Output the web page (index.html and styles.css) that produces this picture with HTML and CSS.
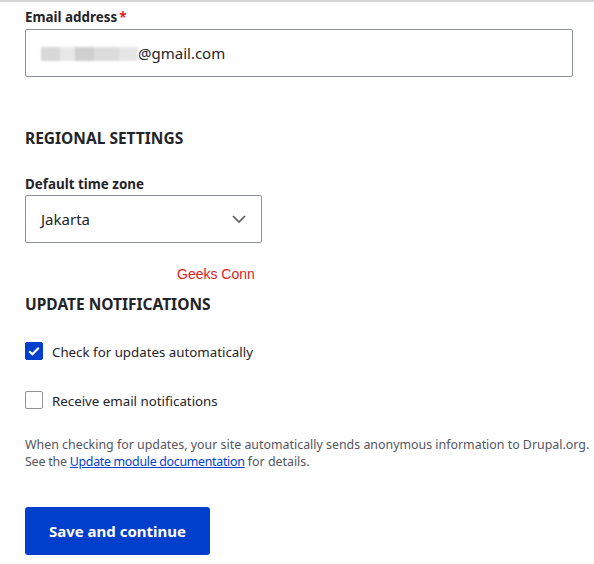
FILE: index.html
```html
<!DOCTYPE html>
<html lang="en">
<head>
<meta charset="utf-8">
<title>Configure site</title>
<link rel="stylesheet" href="styles.css">
</head>
<body>
<div class="topline"></div>
<form class="form">
  <div class="field">
    <label class="label">Email address<span class="req">*</span></label>
    <div class="input"><span class="blur"></span><span>@gmail.com</span></div>
  </div>

  <h2 class="section-title regional">REGIONAL SETTINGS</h2>
  <div class="field">
    <label class="label">Default time zone</label>
    <div class="select">
      <span>Jakarta</span>
      <svg class="chev" width="14" height="8" viewBox="0 0 14 8"><path d="M1 1l6 6 6-6" fill="none" stroke="#55565b" stroke-width="1.6"/></svg>
    </div>
  </div>

  <div class="watermark">Geeks Conn</div>

  <h2 class="section-title updates">UPDATE NOTIFICATIONS</h2>

  <div class="check-row first">
    <span class="box checked"><svg width="12" height="10" viewBox="0 0 12 10"><path d="M1.2 5.2l3.2 3.1 6.4-6.6" fill="none" stroke="#fff" stroke-width="2.1"/></svg></span>
    <span class="check-label">Check for updates automatically</span>
  </div>
  <div class="check-row second">
    <span class="box"></span>
    <span class="check-label">Receive email notifications</span>
  </div>

  <p class="desc">When checking for updates, your site automatically sends anonymous information to Drupal.org.<br><span class="see">See the </span><a href="#">Update module documentation</a> for details.</p>

  <button type="button" class="btn">Save and continue</button>
</form>
</body>
</html>
```
FILE: styles.css
```css
html, body {
  margin: 0;
  padding: 0;
  background: #fff;
}
body {
  font-family: "Noto Sans", "Open Sans", sans-serif;
  color: #232429;
  width: 594px;
  height: 564px;
  overflow: hidden;
}
.topline {
  height: 2px;
  background: #d6d6da;
}
.form {
  padding: 6px 21px 0 25px;
}
.field {
  display: flex;
  flex-direction: column;
}
.label {
  font-size: 13.4px;
  font-weight: 700;
  line-height: 18px;
  margin-bottom: 3px;
}
.req {
  color: #dc2323;
  margin-left: 2px;
}
.input, .select {
  box-sizing: border-box;
  height: 48px;
  border: 1px solid #8e929c;
  border-radius: 2px;
  display: flex;
  align-items: center;
  font-size: 15px;
  padding-left: 15px;
}
.blur {
  display: inline-block;
  width: 97px;
  height: 14px;
  margin-top: 2px;
  background: linear-gradient(90deg, #d8d8d8 0 20%, #e8e8e8 20% 35%, #cfcfcf 35% 55%, #dcdcdc 55% 80%, #e6e6e6 80%);
  filter: blur(1px);
}
.section-title {
  margin: 0;
  font-size: 15.5px;
  font-weight: 700;
  line-height: 20px;
}
.regional {
  margin-top: 51px;
  margin-bottom: 27px;
}
.select {
  width: 237px;
  justify-content: space-between;
  padding-right: 15px;
  margin-top: -1px;
}
.chev {
  display: block;
}
.watermark {
  font-family: "Liberation Sans", Arial, sans-serif;
  color: #e31b1b;
  font-size: 14px;
  line-height: 16px;
  margin: 23px 0 0 152px;
}
.updates {
  margin-top: 12px;
}
.check-row {
  display: flex;
  align-items: center;
  gap: 9px;
  height: 18px;
  font-size: 13.3px;
}
.check-label {
  padding-top: 2px;
}
.check-row.first {
  margin-top: 28px;
}
.check-row.second {
  margin-top: 31px;
}
.box {
  box-sizing: border-box;
  width: 18px;
  height: 18px;
  border: 1px solid #8e929c;
  border-radius: 2px;
  display: flex;
  align-items: center;
  justify-content: center;
}
.box.checked {
  background: #003ecc;
  border-color: #003ecc;
}
.desc {
  margin: 27px 0 0;
  font-size: 12.4px;
  line-height: 17px;
  color: #545560;
  white-space: nowrap;
}
.see {
  letter-spacing: -0.2px;
}
.desc a {
  color: #003ecc;
  text-decoration: underline;
  letter-spacing: -0.3px;
}
.btn {
  margin-top: 37px;
  width: 185px;
  height: 48px;
  border: 0;
  border-radius: 3px;
  background: #003ecc;
  color: #fff;
  font-family: "Noto Sans", "Open Sans", sans-serif;
  font-size: 15px;
  font-weight: 700;
  cursor: pointer;
}
```
